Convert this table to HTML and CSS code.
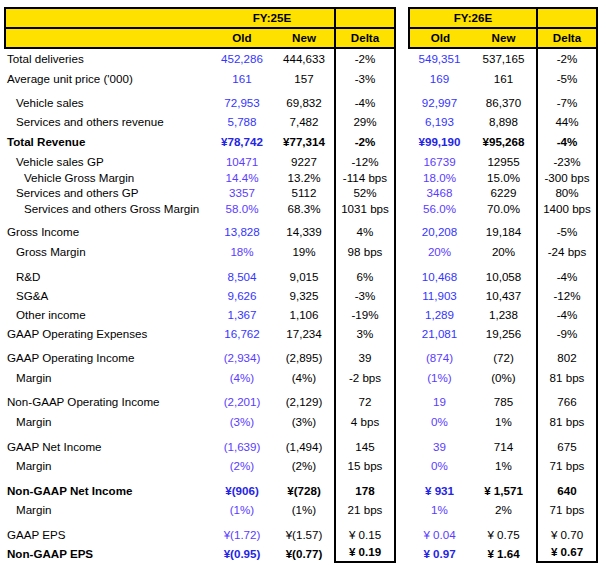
FILE: index.html
```html
<!DOCTYPE html>
<html>
<head>
<meta charset="utf-8">
<link rel="stylesheet" href="styles.css">
</head>
<body>
<div class="sheet">
  <div class="hrow r1">
    <div class="hd bl"></div><div class="hd span2">FY:25E</div><div class="hd bl br"></div><div class="gap"></div><div class="hd bl span2">FY:26E</div><div class="hd bl br"></div>
  </div>
  <div class="hrow r2">
    <div class="hd bl"></div><div class="hd">Old</div><div class="hd">New</div><div class="hd bl br">Delta</div><div class="gap"></div><div class="hd bl">Old</div><div class="hd">New</div><div class="hd bl br">Delta</div>
  </div>
  <div class="row"><div>Total deliveries</div><div>452,286</div><div>444,633</div><div>-2%</div><div></div><div>549,351</div><div>537,165</div><div>-2%</div></div>
  <div class="row"><div>Average unit price ('000)</div><div>161</div><div>157</div><div>-3%</div><div></div><div>169</div><div>161</div><div>-5%</div></div>
  <div class="row i1"><div>Vehicle sales</div><div>72,953</div><div>69,832</div><div>-4%</div><div></div><div>92,997</div><div>86,370</div><div>-7%</div></div>
  <div class="row i1"><div>Services and others revenue</div><div>5,788</div><div>7,482</div><div>29%</div><div></div><div>6,193</div><div>8,898</div><div>44%</div></div>
  <div class="row b"><div>Total Revenue</div><div>¥78,742</div><div>¥77,314</div><div>-2%</div><div></div><div>¥99,190</div><div>¥95,268</div><div>-4%</div></div>
  <div class="row i1 pv"><div>Vehicle sales GP</div><div>10471</div><div>9227</div><div>-12%</div><div></div><div>16739</div><div>12955</div><div>-23%</div></div>
  <div class="row i2 pv"><div>Vehicle Gross Margin</div><div>14.4%</div><div>13.2%</div><div>-114 bps</div><div></div><div>18.0%</div><div>15.0%</div><div>-300 bps</div></div>
  <div class="row i1 pv"><div>Services and others GP</div><div>3357</div><div>5112</div><div>52%</div><div></div><div>3468</div><div>6229</div><div>80%</div></div>
  <div class="row i2 pv"><div>Services and others Gross Margin</div><div>58.0%</div><div>68.3%</div><div>1031 bps</div><div></div><div>56.0%</div><div>70.0%</div><div>1400 bps</div></div>
  <div class="row"><div>Gross Income</div><div>13,828</div><div>14,339</div><div>4%</div><div></div><div>20,208</div><div>19,184</div><div>-5%</div></div>
  <div class="row i1 pv"><div>Gross Margin</div><div>18%</div><div>19%</div><div>98 bps</div><div></div><div>20%</div><div>20%</div><div>-24 bps</div></div>
  <div class="row i1"><div>R&amp;D</div><div>8,504</div><div>9,015</div><div>6%</div><div></div><div>10,468</div><div>10,058</div><div>-4%</div></div>
  <div class="row i1"><div>SG&amp;A</div><div>9,626</div><div>9,325</div><div>-3%</div><div></div><div>11,903</div><div>10,437</div><div>-12%</div></div>
  <div class="row i1"><div>Other income</div><div>1,367</div><div>1,106</div><div>-19%</div><div></div><div>1,289</div><div>1,238</div><div>-4%</div></div>
  <div class="row"><div>GAAP Operating Expenses</div><div>16,762</div><div>17,234</div><div>3%</div><div></div><div>21,081</div><div>19,256</div><div>-9%</div></div>
  <div class="row pv"><div>GAAP Operating Income</div><div>(2,934)</div><div>(2,895)</div><div>39</div><div></div><div>(874)</div><div>(72)</div><div>802</div></div>
  <div class="row i1 pv"><div>Margin</div><div>(4%)</div><div>(4%)</div><div>-2 bps</div><div></div><div>(1%)</div><div>(0%)</div><div>81 bps</div></div>
  <div class="row pv"><div>Non-GAAP Operating Income</div><div>(2,201)</div><div>(2,129)</div><div>72</div><div></div><div>19</div><div>785</div><div>766</div></div>
  <div class="row i1 pv"><div>Margin</div><div>(3%)</div><div>(3%)</div><div>4 bps</div><div></div><div>0%</div><div>1%</div><div>81 bps</div></div>
  <div class="row pv"><div>GAAP Net Income</div><div>(1,639)</div><div>(1,494)</div><div>145</div><div></div><div>39</div><div>714</div><div>675</div></div>
  <div class="row i1 pv"><div>Margin</div><div>(2%)</div><div>(2%)</div><div>15 bps</div><div></div><div>0%</div><div>1%</div><div>71 bps</div></div>
  <div class="row b"><div>Non-GAAP Net Income</div><div>¥(906)</div><div>¥(728)</div><div>178</div><div></div><div>¥ 931</div><div>¥ 1,571</div><div>640</div></div>
  <div class="row i1 pv"><div>Margin</div><div>(1%)</div><div>(1%)</div><div>21 bps</div><div></div><div>1%</div><div>2%</div><div>71 bps</div></div>
  <div class="row pv"><div>GAAP EPS</div><div>¥(1.72)</div><div>¥(1.57)</div><div>¥ 0.15</div><div></div><div>¥ 0.04</div><div>¥ 0.75</div><div>¥ 0.70</div></div>
  <div class="row b last"><div>Non-GAAP EPS</div><div>¥(0.95)</div><div>¥(0.77)</div><div>¥ 0.19</div><div></div><div>¥ 0.97</div><div>¥ 1.64</div><div>¥ 0.67</div></div>
</div>
</body>
</html>
```
FILE: styles.css
```css
body {
  margin: 0;
  background: #fff;
  color: #000;
  font-family: "Liberation Sans", Arial, sans-serif;
  font-size: 11.6px;
}

.sheet {
  display: grid;
  grid-template-columns: 206px 64px 60px 62px 12px 63px 65px 62px;
  grid-template-rows: 20px 22px 17px 20px 24px 19px 20px 20px 16px 15px 16px 23px 20px 25px 19px 19px 19px 24px 20px 24px 20px 25px 19px 25px 19px 25px 21px;
  width: 594px;
  margin: 7px 0 0 4px;
}

.row, .hrow { display: contents; }

.row > *, .hrow > * {
  box-sizing: border-box;
  display: flex;
  align-items: flex-end;
  justify-content: center;
  line-height: 14px;
  white-space: nowrap;
}

.hd {
  background: #ffe100;
  font-weight: bold;
  align-items: center !important;
  border-top: 2px solid #000;
}
.r2 .hd { border-bottom: 2px solid #000; }
.bl { border-left: 2px solid #000; }
.br { border-right: 2px solid #000; }
.span2 { grid-column: span 2; }

.row > :first-child { justify-content: flex-start; padding-left: 3px; }
.i1 > :first-child { padding-left: 12px; }
.i2 > :first-child { padding-left: 20px; }

.row > :nth-child(2), .row > :nth-child(6) { color: #3535ff; }
.pv > :nth-child(2), .pv > :nth-child(6) { color: #5a3cff; }
.b > :nth-child(2), .b > :nth-child(6) { color: #2424e6; }

.row > :nth-child(4), .row > :nth-child(8) {
  border-left: 2px solid #000;
  border-right: 2px solid #000;
}

.b { font-weight: bold; }

.last > * { padding-bottom: 2px; }
.last > :nth-child(4), .last > :nth-child(8) { border-bottom: 2px solid #000; }
```
